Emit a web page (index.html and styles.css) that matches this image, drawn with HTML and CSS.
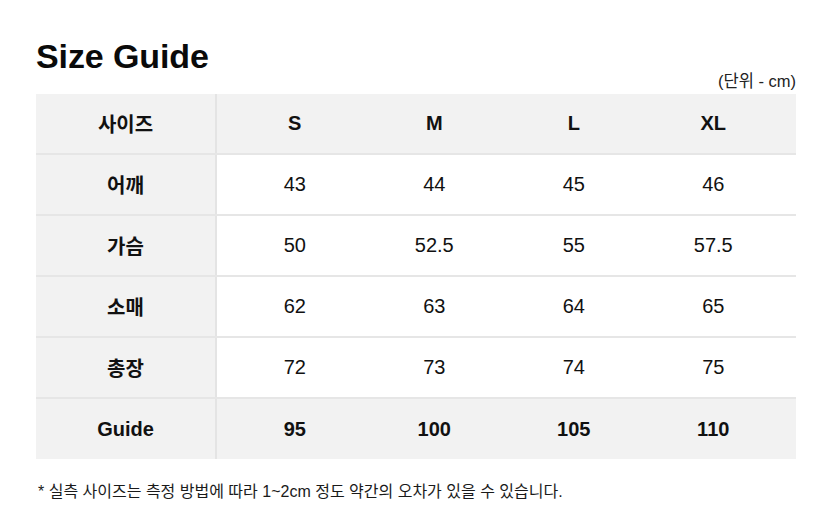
FILE: index.html
```html
<!DOCTYPE html>
<html lang="ko">
<head>
<meta charset="utf-8">
<title>Size Guide</title>
<link rel="stylesheet" href="styles.css">
</head>
<body>
<main class="page">
  <h1 class="title">Size Guide</h1>
  <p class="unit">(단위 - cm)</p>
  <div class="table">
    <div class="row row-head">
      <div class="label">사이즈</div>
      <div class="vals"><span>S</span><span>M</span><span>L</span><span>XL</span></div>
    </div>
    <div class="row">
      <div class="label">어깨</div>
      <div class="vals"><span>43</span><span>44</span><span>45</span><span>46</span></div>
    </div>
    <div class="row">
      <div class="label">가슴</div>
      <div class="vals"><span>50</span><span>52.5</span><span>55</span><span>57.5</span></div>
    </div>
    <div class="row">
      <div class="label">소매</div>
      <div class="vals"><span>62</span><span>63</span><span>64</span><span>65</span></div>
    </div>
    <div class="row">
      <div class="label">총장</div>
      <div class="vals"><span>72</span><span>73</span><span>74</span><span>75</span></div>
    </div>
    <div class="row row-guide">
      <div class="label">Guide</div>
      <div class="vals"><span>95</span><span>100</span><span>105</span><span>110</span></div>
    </div>
  </div>
  <p class="note">* 실측 사이즈는 측정 방법에 따라 1~2cm 정도 약간의 오차가 있을 수 있습니다.</p>
</main>
</body>
</html>
```
FILE: styles.css
```css
html, body {
  margin: 0;
  padding: 0;
  background: #ffffff;
}

body {
  font-family: "Liberation Sans", "Noto Sans CJK KR", sans-serif;
  color: #111111;
}

.page {
  padding: 36px 36px 0 36px;
}

.title {
  margin: 0;
  font-size: 34px;
  line-height: 40px;
  font-weight: 700;
  letter-spacing: -0.1px;
  color: #0a0a0a;
}

.unit {
  margin: -4px 0 0 0;
  text-align: right;
  font-size: 16.5px;
  line-height: 18px;
  color: #222222;
}

.table {
  margin-top: 4px;
}

.row {
  display: grid;
  grid-template-columns: 181px 1fr;
  height: 59px;
  border-bottom: 2px solid #e6e6e6;
}

.row:last-child {
  border-bottom: none;
  height: 60px;
}

.label {
  display: flex;
  align-items: center;
  justify-content: center;
  background: #f2f2f2;
  border-right: 2px solid #e4e4e4;
  font-size: 20px;
  font-weight: 700;
}

.vals {
  display: grid;
  grid-template-columns: repeat(4, 1fr);
  padding: 0 13px 0 8px;
  font-size: 20px;
}

.vals span {
  display: flex;
  align-items: center;
  justify-content: center;
}

.row-head,
.row-guide {
  background: #f2f2f2;
}

.row-head .vals,
.row-guide .vals {
  font-weight: 700;
}

.note {
  margin: 23px 0 0 2px;
  font-size: 16px;
  line-height: 20px;
  color: #1a1a1a;
}
```
